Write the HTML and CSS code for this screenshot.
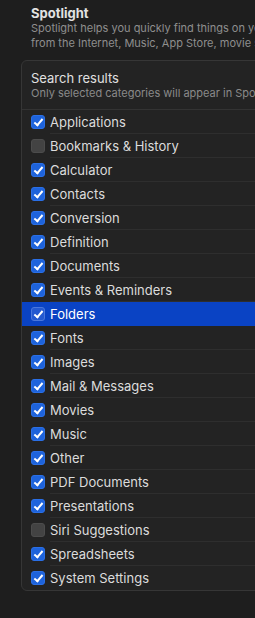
FILE: index.html
```html
<!DOCTYPE html>
<html lang="en">
<head>
    <meta charset="UTF-8">
    <meta name="viewport" content="width=device-width, initial-scale=1.0">
    <title>Spotlight</title>
    <link rel="stylesheet" href="styles.css">
</head>
<body>
    <div class="page">
        <div class="intro">
            <h2>Spotlight</h2>
            <p>Spotlight helps you quickly find things on your Mac. Suggestions include content</p>
            <p>from the Internet, Music, App Store, movie showtimes, locations nearby, and more.</p>
        </div>

        <div class="panel">
            <div class="panel-head">
                <h3>Search results</h3>
                <p>Only selected categories will appear in Spotlight search results.</p>
            </div>
            <div class="list">
                <div class="row"><span class="box on"></span><span class="label">Applications</span></div>
                <div class="row"><span class="box"></span><span class="label">Bookmarks &amp; History</span></div>
                <div class="row"><span class="box on"></span><span class="label">Calculator</span></div>
                <div class="row"><span class="box on"></span><span class="label">Contacts</span></div>
                <div class="row"><span class="box on"></span><span class="label">Conversion</span></div>
                <div class="row"><span class="box on"></span><span class="label">Definition</span></div>
                <div class="row"><span class="box on"></span><span class="label">Documents</span></div>
                <div class="row"><span class="box on"></span><span class="label">Events &amp; Reminders</span></div>
                <div class="row selected"><span class="box on"></span><span class="label">Folders</span></div>
                <div class="row"><span class="box on"></span><span class="label">Fonts</span></div>
                <div class="row"><span class="box on"></span><span class="label">Images</span></div>
                <div class="row"><span class="box on"></span><span class="label">Mail &amp; Messages</span></div>
                <div class="row"><span class="box on"></span><span class="label">Movies</span></div>
                <div class="row"><span class="box on"></span><span class="label">Music</span></div>
                <div class="row"><span class="box on"></span><span class="label">Other</span></div>
                <div class="row"><span class="box on"></span><span class="label">PDF Documents</span></div>
                <div class="row"><span class="box on"></span><span class="label">Presentations</span></div>
                <div class="row"><span class="box"></span><span class="label">Siri Suggestions</span></div>
                <div class="row"><span class="box on"></span><span class="label">Spreadsheets</span></div>
                <div class="row"><span class="box on"></span><span class="label">System Settings</span></div>
            </div>
        </div>
    </div>
</body>
</html>
```

FILE: styles.css
```css
body {
    margin: 0;
    background-color: #1e1e1e;
    font-family: Inter, "Liberation Sans", sans-serif;
    color: #dedede;
    overflow: hidden;
    height: 618px;
}
.page {
    width: 420px;
}
.intro {
    padding: 5px 0 0 31px;
}
.intro h2 {
    margin: 0;
    font-size: 13px;
    line-height: 16px;
    font-weight: 700;
    color: #e2e2e2;
}
.intro p {
    margin: 0;
    font-size: 11px;
    line-height: 15px;
    color: #8e8e8e;
    white-space: nowrap;
}
.panel {
    margin: 9px 0 0 21px;
    background-color: #232323;
    border: 1px solid #363636;
    border-radius: 6px;
    overflow: hidden;
}
.panel-head {
    padding: 9px 0 9px 9px;
    border-bottom: 1px solid #333;
}
.panel-head h3 {
    margin: 0;
    font-size: 13px;
    line-height: 16px;
    font-weight: 400;
    color: #e0e0e0;
}
.panel-head p {
    margin: 0;
    font-size: 11px;
    line-height: 14px;
    color: #8a8a8a;
    white-space: nowrap;
}
.row {
    display: flex;
    align-items: center;
    height: 24px;
    padding-left: 9px;
}
.label {
    flex: 1;
    height: 24px;
    line-height: 24px;
    margin-left: 5px;
    font-size: 13px;
    color: #dcdcdc;
    border-bottom: 1px solid #2e2e2e;
    box-sizing: border-box;
}
.row:last-child .label,
.row.selected .label {
    border-bottom: none;
}
.row.selected {
    background-color: #0a43c4;
}
.row.selected .label {
    color: #fff;
}
.box {
    width: 14px;
    height: 14px;
    border-radius: 3px;
    background-color: #434343;
    box-sizing: border-box;
    border: 1px solid #4c4c4c;
    position: relative;
}
.box.on {
    background-color: #1e63db;
    border-color: #2a6fe6;
}
.box.on::after {
    content: "";
    position: absolute;
    left: 4px;
    top: 1px;
    width: 3px;
    height: 7px;
    border: solid #fff;
    border-width: 0 2px 2px 0;
    transform: rotate(40deg);
}
.row.selected .box.on {
    background-color: #2459d0;
    border-color: #4a77dc;
}
```
